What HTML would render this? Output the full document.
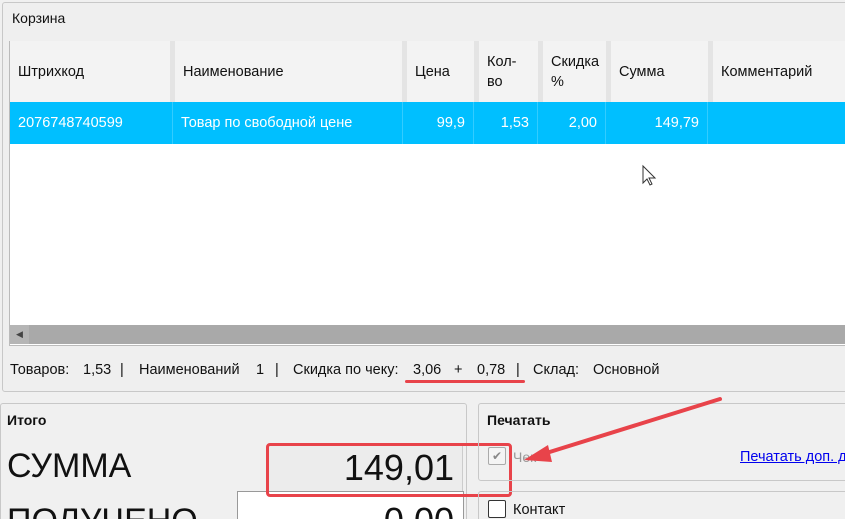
<html style="height:519px;overflow:hidden"><head><style>
body{margin:0;width:845px;height:519px;overflow:hidden;background:#f0f0f0;font-family:"Liberation Sans",sans-serif;font-size:14px;color:#111;position:relative}
.a{position:absolute}
.hd{position:absolute;top:41px;height:61px;background:#f3f3f3;border-right:5px solid #e4e4e4;box-sizing:border-box;padding-left:8px;display:flex;align-items:center;font-size:14.5px}
.c{position:absolute;top:102px;height:42px;line-height:42px;color:#fff;border-right:1px solid #33ccff;box-sizing:border-box;padding:0 8px;font-size:14.5px}
.s{position:absolute;top:362px;font-size:14.5px;white-space:nowrap}
</style></head><body>
<div class="a" style="left:2px;top:2px;width:850px;height:388px;border:1px solid #c8c8c8;border-radius:3px;background:#efefef"></div>
<div class="a" style="left:12px;top:10px">Корзина</div>
<div class="a" style="left:9px;top:41px;width:840px;height:303px;border:1px solid #bbb;background:#fff"></div>
<div class="hd" style="left:10px;width:165px">Штрихкод</div>
<div class="hd" style="left:175px;width:232px">Наименование</div>
<div class="hd" style="left:407px;width:72px">Цена</div>
<div class="hd" style="left:479px;width:64px;line-height:20px">Кол-<br>во</div>
<div class="hd" style="left:543px;width:68px;line-height:20px">Скидка<br>%</div>
<div class="hd" style="left:611px;width:102px">Сумма</div>
<div class="hd" style="left:713px;width:140px;border:0">Комментарий</div>
<div class="a" style="left:10px;top:102px;width:840px;height:42px;background:#00bfff"></div>
<div class="c" style="left:10px;width:163px">2076748740599</div>
<div class="c" style="left:173px;width:230px">Товар по свободной цене</div>
<div class="c" style="left:403px;width:71px;text-align:right">99,9</div>
<div class="c" style="left:474px;width:64px;text-align:right">1,53</div>
<div class="c" style="left:538px;width:68px;text-align:right">2,00</div>
<div class="c" style="left:606px;width:102px;text-align:right">149,79</div>
<div class="a" style="left:10px;top:325px;width:840px;height:19px;background:#a9a9a9"></div>
<div class="a" style="left:10px;top:325px;width:19px;height:19px;background:#b5b5b5;color:#444;font-size:9px;line-height:19px;text-align:center">◀</div>
<div class="s" style="left:10px">Товаров:</div>
<div class="s" style="left:83px">1,53</div>
<div class="s" style="left:120px">|</div>
<div class="s" style="left:139px">Наименований</div>
<div class="s" style="left:256px">1</div>
<div class="s" style="left:275px">|</div>
<div class="s" style="left:293px">Скидка по чеку:</div>
<div class="s" style="left:413px">3,06</div>
<div class="s" style="left:454px">+</div>
<div class="s" style="left:477px">0,78</div>
<div class="s" style="left:516px">|</div>
<div class="s" style="left:533px">Склад:</div>
<div class="s" style="left:593px">Основной</div>
<div class="a" style="left:405px;top:380px;width:120px;height:3px;background:#e8434a;border-radius:2px"></div>
<div class="a" style="left:0;top:403px;width:465px;height:130px;border:1px solid #c8c8c8;border-radius:3px"></div>
<div class="a" style="left:7px;top:412px;font-weight:bold;font-size:14px">Итого</div>
<div class="a" style="left:7px;top:447px;font-size:34px">СУММА</div>
<div class="a" style="left:7px;top:502px;font-size:34px">ПОЛУЧЕНО</div>
<div class="a" style="left:268px;top:444px;width:193px;height:48px;background:#ececec;border:1px solid #ccc"></div>
<div class="a" style="left:268px;top:447px;width:186px;text-align:right;font-size:36px">149,01</div>
<div class="a" style="left:237px;top:491px;width:225px;height:40px;background:#fff;border:1px solid #999"></div>
<div class="a" style="left:237px;top:500px;width:217px;text-align:right;font-size:36px">0,00</div>
<div class="a" style="left:266px;top:443px;width:240px;height:48px;border:3px solid #e8434a;border-radius:4px"></div>
<div class="a" style="left:478px;top:403px;width:370px;height:76px;border:1px solid #c8c8c8;border-radius:3px"></div>
<div class="a" style="left:487px;top:412px;font-weight:bold">Печатать</div>
<div class="a" style="left:488px;top:447px;width:16px;height:16px;border:1px solid #aaa;background:#f4f4f4;border-radius:2px;color:#888;font-size:12px;line-height:16px;text-align:center">✔</div>
<div class="a" style="left:513px;top:449px;color:#999">Чек</div>
<div class="a" style="left:740px;top:449px;color:#0000ee;text-decoration:underline;white-space:nowrap;font-size:14.5px">Печатать доп. д</div>
<div class="a" style="left:478px;top:491px;width:370px;height:40px;border:1px solid #c8c8c8;border-radius:3px"></div>
<div class="a" style="left:488px;top:500px;width:16px;height:16px;border:1px solid #333;background:#fff;border-radius:2px"></div>
<div class="a" style="left:513px;top:502px;font-size:14.5px">Контакт</div>
<svg class="a" style="left:0;top:0" width="845" height="519"><line x1="720" y1="399" x2="540" y2="455" stroke="#e8434a" stroke-width="4" stroke-linecap="round"/><polygon points="524,460 548,445 552,462" fill="#e8434a"/>
<path d="M643 166 L643 183 L647 179 L650 185 L652 184 L649 178 L655 178 Z" fill="#fff" stroke="#333" stroke-width="1"/></svg>
</body></html>
